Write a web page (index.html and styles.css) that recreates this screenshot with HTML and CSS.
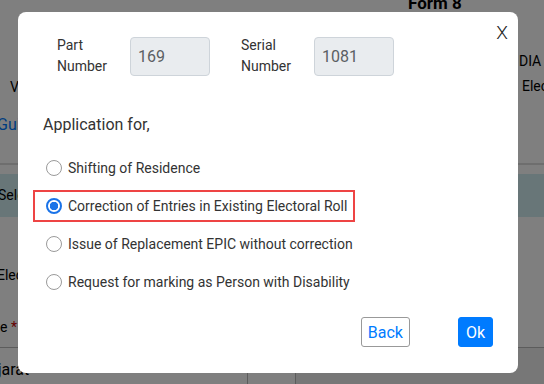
FILE: index.html
```html
<!DOCTYPE html>
<html lang="en">
<head>
  <meta charset="UTF-8" />
  <meta name="viewport" content="width=device-width, initial-scale=1.0"/>
  <title>Form 8</title>
  <link rel="stylesheet" href="styles.css">
</head>
<body>
  <div class="page">
    <div class="form-title">Form 8</div>
    <div class="intro">
      <div class="intro-left">Voter Details</div>
      <div class="intro-right">
        <div class="intro-org">DIA</div>
        <div class="intro-sub">Election</div>
      </div>
    </div>
    <a href="#" class="guide-link">Guidelines for filling the form</a>
    <div class="section-band">Select the option</div>
    <div class="field-label">Electoral roll</div>
    <div class="field-label state">State <span class="req">*</span></div>
    <div class="field-row">
      <div class="field-box">Gujarat</div>
      <div class="field-box small"></div>
      <div class="field-box disabled"></div>
    </div>
  </div>

  <div class="overlay">
    <div class="modal">
      <button class="close-btn">X</button>

      <div class="modal-top">
        <div class="field">
          <label class="field-name">Part<br>Number</label>
          <input class="field-input" type="text" value="169" disabled>
        </div>
        <div class="field">
          <label class="field-name">Serial<br>Number</label>
          <input class="field-input" type="text" value="1081" disabled>
        </div>
      </div>

      <p class="apply-title">Application for,</p>

      <div class="options">
        <label class="option"><input type="radio" name="apply"> Shifting of Residence</label>
        <label class="option highlighted"><input type="radio" name="apply" checked> Correction of Entries in Existing Electoral Roll</label>
        <label class="option"><input type="radio" name="apply"> Issue of Replacement EPIC without correction</label>
        <label class="option"><input type="radio" name="apply"> Request for marking as Person with Disability</label>
      </div>

      <div class="modal-footer">
        <button class="btn btn-back">Back</button>
        <button class="btn btn-ok">Ok</button>
      </div>
    </div>
  </div>
</body>
</html>
```

FILE: styles.css
```css
* { margin: 0; padding: 0; box-sizing: border-box; }

html, body {
  height: 100%;
  font-family: Roboto, "Liberation Sans", sans-serif;
  overflow: hidden;
}

body {
  background: #fff;
  color: #000;
}

/* страница под модалкой */
.page {
  font-size: 14px;
}

.form-title {
  padding-left: 408px;
  margin-top: -7px;
  font-weight: bold;
  font-size: 17px;
  line-height: 20px;
}

.intro {
  display: flex;
  margin-top: 40px;
}

.intro-left {
  width: 519px;
  flex-shrink: 0;
  padding-left: 10px;
  padding-top: 26px;
  line-height: 16px;
  white-space: nowrap;
}

.intro-right {
  white-space: nowrap;
}

.intro-org {
  line-height: 16px;
}

.intro-sub {
  margin-top: 9px;
  padding-left: 3px;
  line-height: 16px;
}

.guide-link {
  display: block;
  color: #007bff;
  text-decoration: none;
  font-size: 16px;
  line-height: 20px;
  margin-top: 20px;
  margin-left: -3px;
  padding-bottom: 28px;
  border-bottom: 2px solid #dcdcdc;
}

.section-band {
  margin-top: 9px;
  height: 43px;
  line-height: 43px;
  background: #d1ecf1;
  font-size: 14px;
  margin-left: -2px;
}

.field-label {
  font-size: 14px;
  margin-left: -3px;
  margin-top: 50px;
  line-height: 16px;
  white-space: nowrap;
}

.field-label.state {
  margin-top: 36px;
  margin-left: -25px;
}

.req {
  color: #c00;
}

.field-row {
  display: flex;
  margin-top: 12px;
  border-top: 1px solid #b8b8b8;
  height: 60px;
}

.field-box {
  width: 247px;
  padding-top: 12px;
  margin-left: -22px;
  font-size: 16px;
  background: #fff;
  white-space: nowrap;
}

.field-box.small {
  width: 48px;
  margin-left: 22px;
  border-left: 1px solid #b8b8b8;
}

.field-box.disabled {
  flex: 1;
  margin-left: 0;
  background: #eeeeee;
  border-left: 1px solid #b8b8b8;
}

/* модалка */
.overlay {
  position: fixed;
  inset: 0;
  background: rgba(0, 0, 0, 0.5);
  padding: 12px 0 0 18px;
}

.modal {
  position: relative;
  width: 500px;
  height: 361px;
  background: #fff;
  border-radius: 8px;
  padding: 23px 25px 25px 25px;
  color: #212529;
}

.close-btn {
  position: absolute;
  top: 9px;
  right: 10px;
  border: none;
  background: none;
  font-family: Roboto, sans-serif;
  font-size: 19px;
  font-weight: 300;
  line-height: 24px;
  color: #222;
  cursor: pointer;
}

.modal-top {
  display: flex;
  gap: 31px;
  padding-left: 14px;
}

.field {
  display: flex;
  align-items: center;
}

.field-name {
  width: 73px;
  font-size: 14px;
  line-height: 21px;
  color: #333;
}

.field-input {
  width: 80px;
  height: 39px;
  padding: 0 7px;
  border: 1px solid #ced4da;
  border-radius: 4px;
  background: #e9ecef;
  font-family: Roboto, sans-serif;
  font-size: 16px;
  color: #5b5f63;
}

.apply-title {
  margin-top: 36px;
  font-size: 16px;
  line-height: 24px;
  color: #333;
}

.options {
  display: flex;
  flex-direction: column;
  align-items: flex-start;
  gap: 6px;
  margin-top: 15px;
  margin-left: -10px;
}

.option {
  display: inline-flex;
  align-items: center;
  gap: 6px;
  height: 32px;
  padding: 0 6px 0 11px;
  border: 2px solid transparent;
  font-size: 14px;
  color: #333;
  cursor: pointer;
}

.option.highlighted {
  border-color: #ee4444;
}

.option input {
  appearance: none;
  width: 16px;
  height: 16px;
  border: 1.5px solid #9a9a9a;
  border-radius: 50%;
  background: #fff;
  flex-shrink: 0;
}

.option input:checked {
  border: 2px solid #1a73e8;
  background: radial-gradient(circle, #1a73e8 0 4px, #fff 4.5px);
}

.modal-footer {
  display: flex;
  justify-content: flex-end;
  gap: 48px;
  margin-top: 19px;
}

.btn {
  height: 30px;
  padding: 0 6px;
  border-radius: 3px;
  font-family: Roboto, sans-serif;
  font-size: 16px;
  cursor: pointer;
}

.btn-back {
  background: #fff;
  border: 1px solid #999;
  color: #007bff;
}

.btn-ok {
  background: #007bff;
  border: 1px solid #007bff;
  color: #fff;
  padding: 0 7px;
}
```
